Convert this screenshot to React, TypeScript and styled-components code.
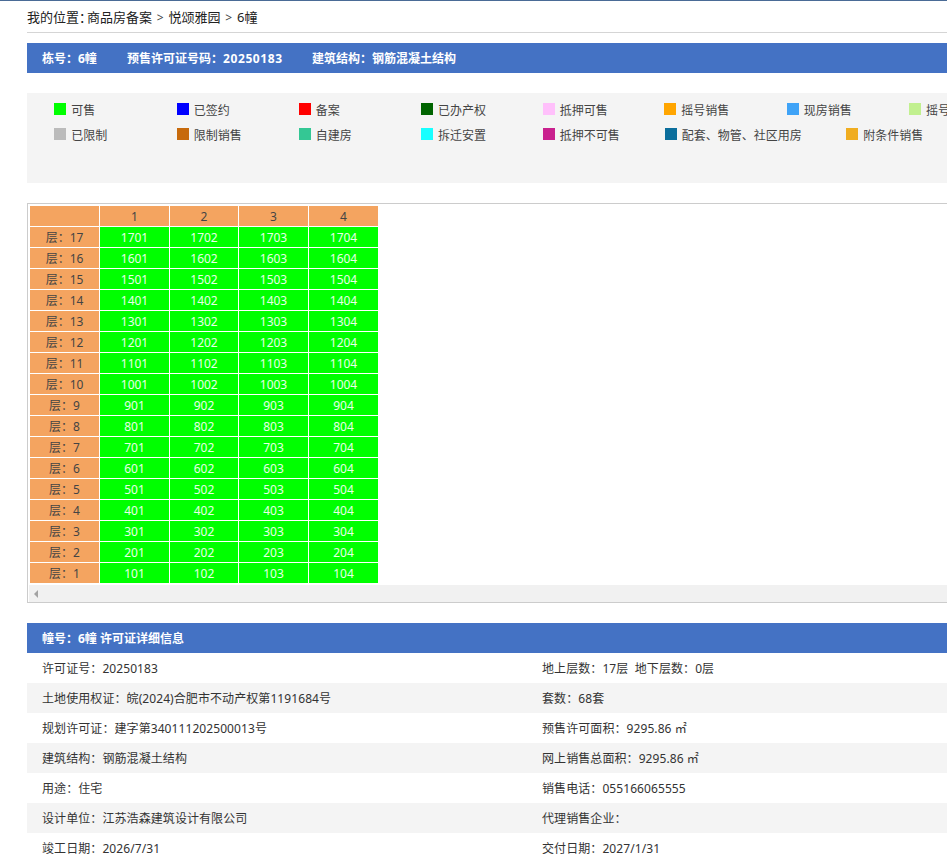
import React from "react";
import styled, { createGlobalStyle } from "styled-components";

const FONT = `"Noto Sans", "Noto Sans CJK SC", sans-serif`;

const GlobalStyle = createGlobalStyle`
    html, body {
        margin: 0;
        padding: 0;
        background: #fff;
        overflow: hidden;
    }
    body {
        font-family: ${FONT};
        font-size: 12px;
        color: #333;
    }
`;

const TopLine = styled.div`
    height: 1px;
    background: #4a6b96;
`;

const Page = styled.div`
    width: 1000px;
    margin-left: 27px;
`;

const Crumbs = styled.div`
    height: 31px;
    font-size: 13px;
    line-height: 33px;
    border-bottom: 1px solid #d5d5d5;
    color: #222;
    white-space: pre;
`;

const CrumbColon = styled.span`
    letter-spacing: -5px;
`;

const Gt = styled.span`
    margin: 0 4.8px;
    font-size: 12px;
    color: #444;
`;

const BlueBar = styled.div<{ $top: number }>`
    display: flex;
    height: 30px;
    margin-top: ${(p) => p.$top}px;
    padding-left: 15px;
    align-items: center;
    background: #4472c4;
    color: #fff;
    font-weight: 700;
`;

const BarItem = styled.span<{ $width?: number }>`
    width: ${(p) => (p.$width ? `${p.$width}px` : "auto")};
    white-space: nowrap;
`;

const BarNumber = styled.span`
    letter-spacing: 0.6px;
`;

const Legend = styled.div`
    height: 82px;
    margin-top: 20px;
    padding: 4px 0 4px 27.3px;
    background: #f4f4f4;
    color: #444;
`;

const LegendRow = styled.div`
    display: flex;
    height: 25px;
    align-items: center;
`;

const LegendItem = styled.div<{ $width: number }>`
    display: flex;
    flex: none;
    width: ${(p) => p.$width}px;
    align-items: center;
    white-space: nowrap;
`;

const Swatch = styled.i<{ $color: string }>`
    flex: none;
    width: 12px;
    height: 12px;
    margin: -2px 5px 0 0;
    background: ${(p) => p.$color};
`;

const ScrollBox = styled.div`
    margin-top: 20px;
    padding: 1px 0 0 1px;
    border: 1px solid #ccc;
    border-right: 0;
`;

const Table = styled.table`
    border-collapse: separate;
    border-spacing: 1px;
    font-size: 12px;
    table-layout: fixed;

    td:nth-child(3) {
        width: 68px;
    }
`;

const Head = styled.td`
    width: 69px;
    height: 20px;
    padding: 0;
    background: #f4a460;
    color: #444;
    text-align: center;
`;

const Room = styled.td`
    height: 20px;
    padding: 0;
    background: #00ff00;
    color: #e8ffe8;
    text-align: center;
`;

const ScrollTrack = styled.div`
    display: flex;
    height: 17px;
    margin-top: 1px;
    padding-left: 5px;
    align-items: center;
    background: #f1f1f1;
`;

const ArrowLeft = styled.i`
    width: 0;
    height: 0;
    border-top: 4px solid transparent;
    border-bottom: 4px solid transparent;
    border-right: 4px solid #a3a3a3;
`;

const InfoGrid = styled.div`
    display: grid;
    grid-template-columns: 1fr 1fr;
`;

const InfoCell = styled.div<{ $shade: boolean }>`
    height: 30px;
    padding-left: 15px;
    line-height: 32px;
    letter-spacing: 0.08px;
    background: ${(p) => (p.$shade ? "#f4f4f4" : "#fff")};
    color: #333;
    white-space: pre;
`;

const legendRows: [string, string, number][][] = [
    [
        ["#00ff00", "可售", 122.4],
        ["#0000ff", "已签约", 122],
        ["#ff0000", "备案", 122.3],
        ["#006400", "已办产权", 121.7],
        ["#ffc0fb", "抵押可售", 121.6],
        ["#ffa500", "摇号销售", 122.4],
        ["#3fa3f7", "现房销售", 122.3],
        ["#c1f08f", "摇号", 122],
    ],
    [
        ["#bbbbbb", "已限制", 122.4],
        ["#c76a0c", "限制销售", 122],
        ["#34c794", "自建房", 122.3],
        ["#17ffff", "拆迁安置", 121.7],
        ["#c9218e", "抵押不可售", 122],
        ["#0b6e9c", "配套、物管、社区用房", 181.6],
        ["#f0ad20", "附条件销售", 122],
    ],
];

const floors = Array.from({ length: 17 }, (_, i) => 17 - i);

const info = [
    ["许可证号：20250183", "地上层数：17层  地下层数：0层"],
    ["土地使用权证：皖(2024)合肥市不动产权第1191684号", "套数：68套"],
    ["规划许可证：建字第340111202500013号", "预售许可面积：9295.86 ㎡"],
    ["建筑结构：钢筋混凝土结构", "网上销售总面积：9295.86 ㎡"],
    ["用途：住宅", "销售电话：055166065555"],
    ["设计单位：江苏浩森建筑设计有限公司", "代理销售企业："],
    ["竣工日期：2026/7/31", "交付日期：2027/1/31"],
];

export default function App() {
    return (
        <>
            <GlobalStyle />
            <TopLine />
            <Page>
                <Crumbs>
                    我的位置<CrumbColon>：</CrumbColon>商品房备案<Gt>&gt;</Gt>悦颂雅园<Gt>&gt;</Gt>6幢
                </Crumbs>

                <BlueBar $top={10}>
                    <BarItem $width={85}>栋号：6幢</BarItem>
                    <BarItem $width={185}>
                        预售许可证号码：<BarNumber>20250183</BarNumber>
                    </BarItem>
                    <BarItem>建筑结构：钢筋混凝土结构</BarItem>
                </BlueBar>

                <Legend>
                    {legendRows.map((row, i) => (
                        <LegendRow key={i}>
                            {row.map(([color, name, width]) => (
                                <LegendItem key={name} $width={width}>
                                    <Swatch $color={color} />
                                    {name}
                                </LegendItem>
                            ))}
                        </LegendRow>
                    ))}
                </Legend>

                <ScrollBox>
                    <Table>
                        <tbody>
                            <tr>
                                <Head />
                                {[1, 2, 3, 4].map((n) => (
                                    <Head key={n}>{n}</Head>
                                ))}
                            </tr>
                            {floors.map((f) => (
                                <tr key={f}>
                                    <Head>层：{f}</Head>
                                    {[1, 2, 3, 4].map((n) => (
                                        <Room key={n}>{f * 100 + n}</Room>
                                    ))}
                                </tr>
                            ))}
                        </tbody>
                    </Table>
                    <ScrollTrack>
                        <ArrowLeft />
                    </ScrollTrack>
                </ScrollBox>

                <BlueBar $top={20}>幢号：6幢 许可证详细信息</BlueBar>

                <InfoGrid>
                    {info.map((row, i) =>
                        row.map((text) => (
                            <InfoCell key={text} $shade={i % 2 === 1}>
                                {text}
                            </InfoCell>
                        ))
                    )}
                </InfoGrid>
            </Page>
        </>
    );
}
